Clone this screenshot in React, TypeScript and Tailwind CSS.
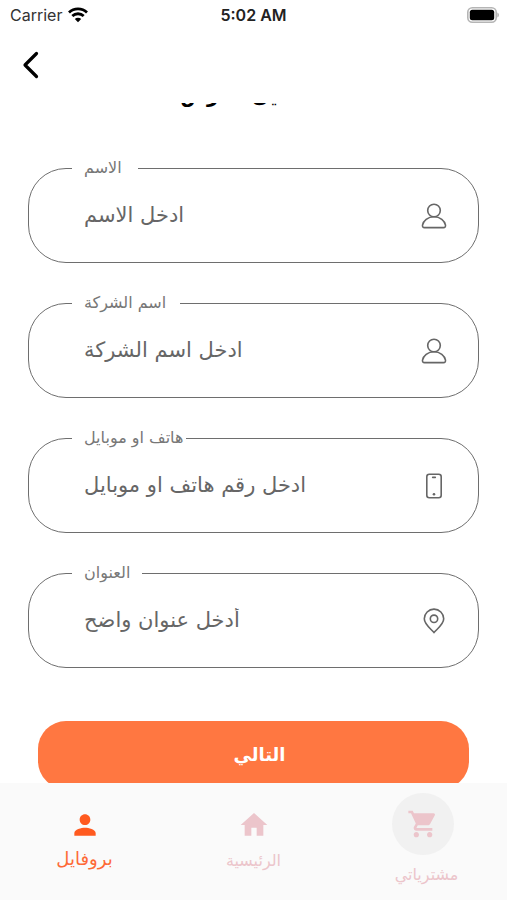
import type { ReactNode } from "react";
import { MdHome, MdPerson, MdShoppingCart } from "react-icons/md";

type Field = {
  id: string;
  label: string;
  placeholder: string;
  notch: string;
  icon: ReactNode;
};

function UserIcon() {
  return (
    <svg className="h-7 w-7" viewBox="0 0 28 28" fill="none" stroke="currentColor" strokeWidth="1.6">
      <circle cx="14" cy="8.500" r="6.300" />
      <path d="M14 14.800c6.200 0 10.800 3.800 11.500 8.400.2 1.500-.5 2.400-2 2.400h-19c-1.500 0-2.200-.9-2-2.400.7-4.600 5.300-8.400 11.500-8.400z" />
    </svg>
  );
}

function PhoneIcon() {
  return (
    <svg className="h-7 w-7" viewBox="0 0 28 28" fill="none" stroke="currentColor" strokeWidth="1.6">
      <rect x="6.800" y="2.200" width="14.400" height="23.600" rx="2.500" />
      <path d="M12.700 5.400h2.600" strokeLinecap="round" />
      <circle cx="14" cy="22.200" r="1.300" fill="currentColor" stroke="none" />
    </svg>
  );
}

function PinIcon() {
  return (
    <svg className="h-7 w-7" viewBox="0 0 28 28" fill="none" stroke="currentColor" strokeWidth="1.6">
      <path d="M14 25.500C10.500 21.500 4.300 17.300 4.300 11.800a9.700 9.700 0 0 1 19.400 0c0 5.500-6.200 9.700-9.700 13.700z" />
      <circle cx="14" cy="11.800" r="3.700" />
    </svg>
  );
}

const fields: Field[] = [
  { id: "name", label: "الاسم", placeholder: "ادخل الاسم", notch: "w-[66px]", icon: <UserIcon /> },
  { id: "company", label: "اسم الشركة", placeholder: "ادخل اسم الشركة", notch: "w-[108px]", icon: <UserIcon /> },
  { id: "phone", label: "هاتف او موبايل", placeholder: "ادخل رقم هاتف او موبايل", notch: "w-[114px]", icon: <PhoneIcon /> },
  { id: "address", label: "العنوان", placeholder: "أدخل عنوان واضح", notch: "w-[70px]", icon: <PinIcon /> },
];

function StatusBar() {
  return (
    <div className="grid h-[30px] shrink-0 grid-cols-3 items-center px-2 font-['Inter',sans-serif] text-base">
      <div className="flex items-center gap-1.5 pl-0.5 text-[#333]">
        <span>Carrier</span>
        <svg className="h-4 w-5 text-black" viewBox="0 0 20 16" fill="none" stroke="currentColor" strokeWidth="2.800">
          <path d="M1 5.400C6 .700 14 .700 19 5.400" />
          <path d="M4.300 9c3.200-3 8.200-3 11.400 0" />
          <path d="M10 15.200l-3.200-3.200c1.700-1.600 4.700-1.600 6.400 0z" fill="currentColor" stroke="none" />
        </svg>
      </div>
      <span className="text-center font-semibold text-[#222]">5:02 AM</span>
      <svg className="h-4 w-8 justify-self-end" viewBox="0 0 32 16">
        <rect x="0.800" y="0.800" width="28.400" height="14.400" rx="4.500" fill="#fff" stroke="#b5b5b5" strokeWidth="1.600" />
        <rect x="2.800" y="2.800" width="24.400" height="10.400" rx="2.500" fill="#000" />
        <path d="M30.500 5.500c1.600.800 1.600 4.200 0 5z" fill="#999" />
      </svg>
    </div>
  );
}

function OutlinedField({ id, label, placeholder, notch, icon }: Field) {
  return (
    <fieldset className="h-[105px] min-w-0 rounded-[38px] border border-[#6e6e6e] pl-[43px] pr-[30px] text-[#666]">
      <legend className={`${notch} h-5 whitespace-nowrap pl-3 text-base leading-5 text-[#777]`}>
        <label htmlFor={id}>{label}</label>
      </legend>
      <div className="flex h-[75px] items-center pl-3">
        <input
          id={id}
          type="text"
          placeholder={placeholder}
          className="min-w-0 flex-1 bg-transparent text-[21px] outline-none placeholder:text-[#666]"
        />
        {icon}
      </div>
    </fieldset>
  );
}

export default function App() {
  return (
    <div className="flex h-screen flex-col bg-white font-['DejaVu_Sans',sans-serif]">
      <StatusBar />

      <header className="flex h-[73px] shrink-0 items-center px-4 pb-1">
        <button type="button" aria-label="رجوع" className="flex h-10 w-8 items-center justify-center">
          <svg className="h-7 w-5" viewBox="0 0 20 28" fill="none" stroke="#000" strokeWidth="3.200" strokeLinecap="round" strokeLinejoin="round">
            <path d="M14.500 2.500L3 14l11.500 11.500" />
          </svg>
        </button>
      </header>

      <main className="min-h-0 flex-1 overflow-y-auto [scrollbar-width:none]">
        <h1 className="-mt-6 text-center text-xl leading-8 font-bold text-black">تفاصيل العرض</h1>

        <form className="px-7 pt-[47px] pb-8" onSubmit={(e) => e.preventDefault()}>
          <div className="flex flex-col gap-[30px]">
            {fields.map((field) => (
              <OutlinedField key={field.id} {...field} />
            ))}
          </div>
          <div className="px-2.5 pt-[53px]">
            <button
              type="submit"
              className="h-[68px] w-full rounded-[28px] bg-[#ff7741] pl-3 text-lg font-bold text-white"
            >
              التالي
            </button>
          </div>
        </form>
      </main>

      <nav className="grid h-[117px] shrink-0 grid-cols-3 bg-[#fafafa] text-[#ecc5cb]">
        <a href="#profile" className="flex flex-col items-center gap-1 pt-[26px] text-lg text-[#ff5a1f]">
          <MdPerson className="h-8 w-8" />
          <span className="opacity-90">بروفايل</span>
        </a>
        <a href="#home" className="flex flex-col items-center gap-2 pt-[26px] text-base">
          <MdHome className="h-8 w-8" />
          الرئيسية
        </a>
        <a href="#cart" className="flex flex-col items-center gap-2 pt-2.5 text-base">
          <span className="flex h-[62px] w-[62px] items-center justify-center rounded-full bg-[#f1f1f1]">
            <MdShoppingCart className="h-8 w-8" />
          </span>
          <span className="pl-2">مشترياتي</span>
        </a>
      </nav>
    </div>
  );
}
